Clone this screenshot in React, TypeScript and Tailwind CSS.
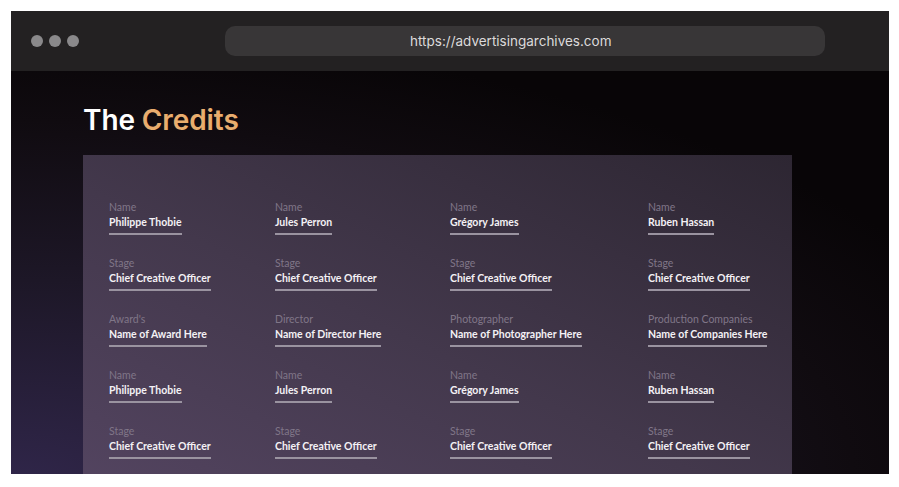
import React from "react";

type Credit = { label: string; value: string };

const rows: Credit[][] = [
  [
    { label: "Name", value: "Philippe Thobie" },
    { label: "Name", value: "Jules Perron" },
    { label: "Name", value: "Grégory James" },
    { label: "Name", value: "Ruben Hassan" },
  ],
  [
    { label: "Stage", value: "Chief Creative Officer" },
    { label: "Stage", value: "Chief Creative Officer" },
    { label: "Stage", value: "Chief Creative Officer" },
    { label: "Stage", value: "Chief Creative Officer" },
  ],
  [
    { label: "Award's", value: "Name of Award Here" },
    { label: "Director", value: "Name of Director Here" },
    { label: "Photographer", value: "Name of Photographer Here" },
    { label: "Production Companies", value: "Name of Companies Here" },
  ],
  [
    { label: "Name", value: "Philippe Thobie" },
    { label: "Name", value: "Jules Perron" },
    { label: "Name", value: "Grégory James" },
    { label: "Name", value: "Ruben Hassan" },
  ],
  [
    { label: "Stage", value: "Chief Creative Officer" },
    { label: "Stage", value: "Chief Creative Officer" },
    { label: "Stage", value: "Chief Creative Officer" },
    { label: "Stage", value: "Chief Creative Officer" },
  ],
];

function CreditItem({ label, value }: Credit) {
  return (
    <div className="flex flex-col items-start" style={{ fontFamily: "Lato, 'Noto Sans', sans-serif" }}>
      <span className="text-[10.5px] leading-[12px] text-[#807688]">{label}</span>
      <span className="mt-[3px] border-b-2 border-[#9a93a0] pb-[4px] text-[10.5px] font-bold leading-[13px] text-[#f4f1f5]">
        {value}
      </span>
    </div>
  );
}

export default function App() {
  return (
    <div
      className="h-[487px] w-[899px] bg-white px-[11px] pt-[11px]"
      style={{ fontFamily: "Inter, 'Noto Sans', sans-serif" }}
    >
      <div className="flex h-[463px] w-[878px] flex-col overflow-hidden">
        {/* browser toolbar */}
        <div className="flex h-[60px] shrink-0 items-center bg-[#232122] pl-[20px]">
          <div className="flex gap-[6px]">
            <span className="h-[12px] w-[12px] rounded-full bg-[#8a898b]" />
            <span className="h-[12px] w-[12px] rounded-full bg-[#8a898b]" />
            <span className="h-[12px] w-[12px] rounded-full bg-[#8a898b]" />
          </div>
          <div className="ml-[146px] flex h-[30px] w-[600px] items-center rounded-[10px] bg-[#383637] pl-[185px]">
            <span className="text-[13.5px] text-[#dcdadb]">https://advertisingarchives.com</span>
          </div>
        </div>

        {/* page content */}
        <div className="flex-1 bg-[radial-gradient(ellipse_120%_110%_at_0%_100%,#30264a_0%,#1d1727_45%,#100b10_80%,#080507_100%)] pl-[72px]">
          <h1 className="mt-[31px] text-[28px] font-semibold leading-[36px] tracking-[-0.1px] text-white">
            The <span className="text-[#e9ad6e]">Credits</span>
          </h1>
          <div className="mt-[17px] h-[330px] w-[709px] bg-[linear-gradient(25deg,#534460_0%,#43384c_45%,#2d2632_100%)] pl-[26px] pt-[46px]">
            <div className="flex flex-col gap-[22px]">
              {rows.map((row, r) => (
                <div key={r} className="grid grid-cols-[166px_175px_198px_1fr]">
                  {row.map((c, i) => (
                    <CreditItem key={i} {...c} />
                  ))}
                </div>
              ))}
            </div>
          </div>
        </div>
      </div>
    </div>
  );
}
